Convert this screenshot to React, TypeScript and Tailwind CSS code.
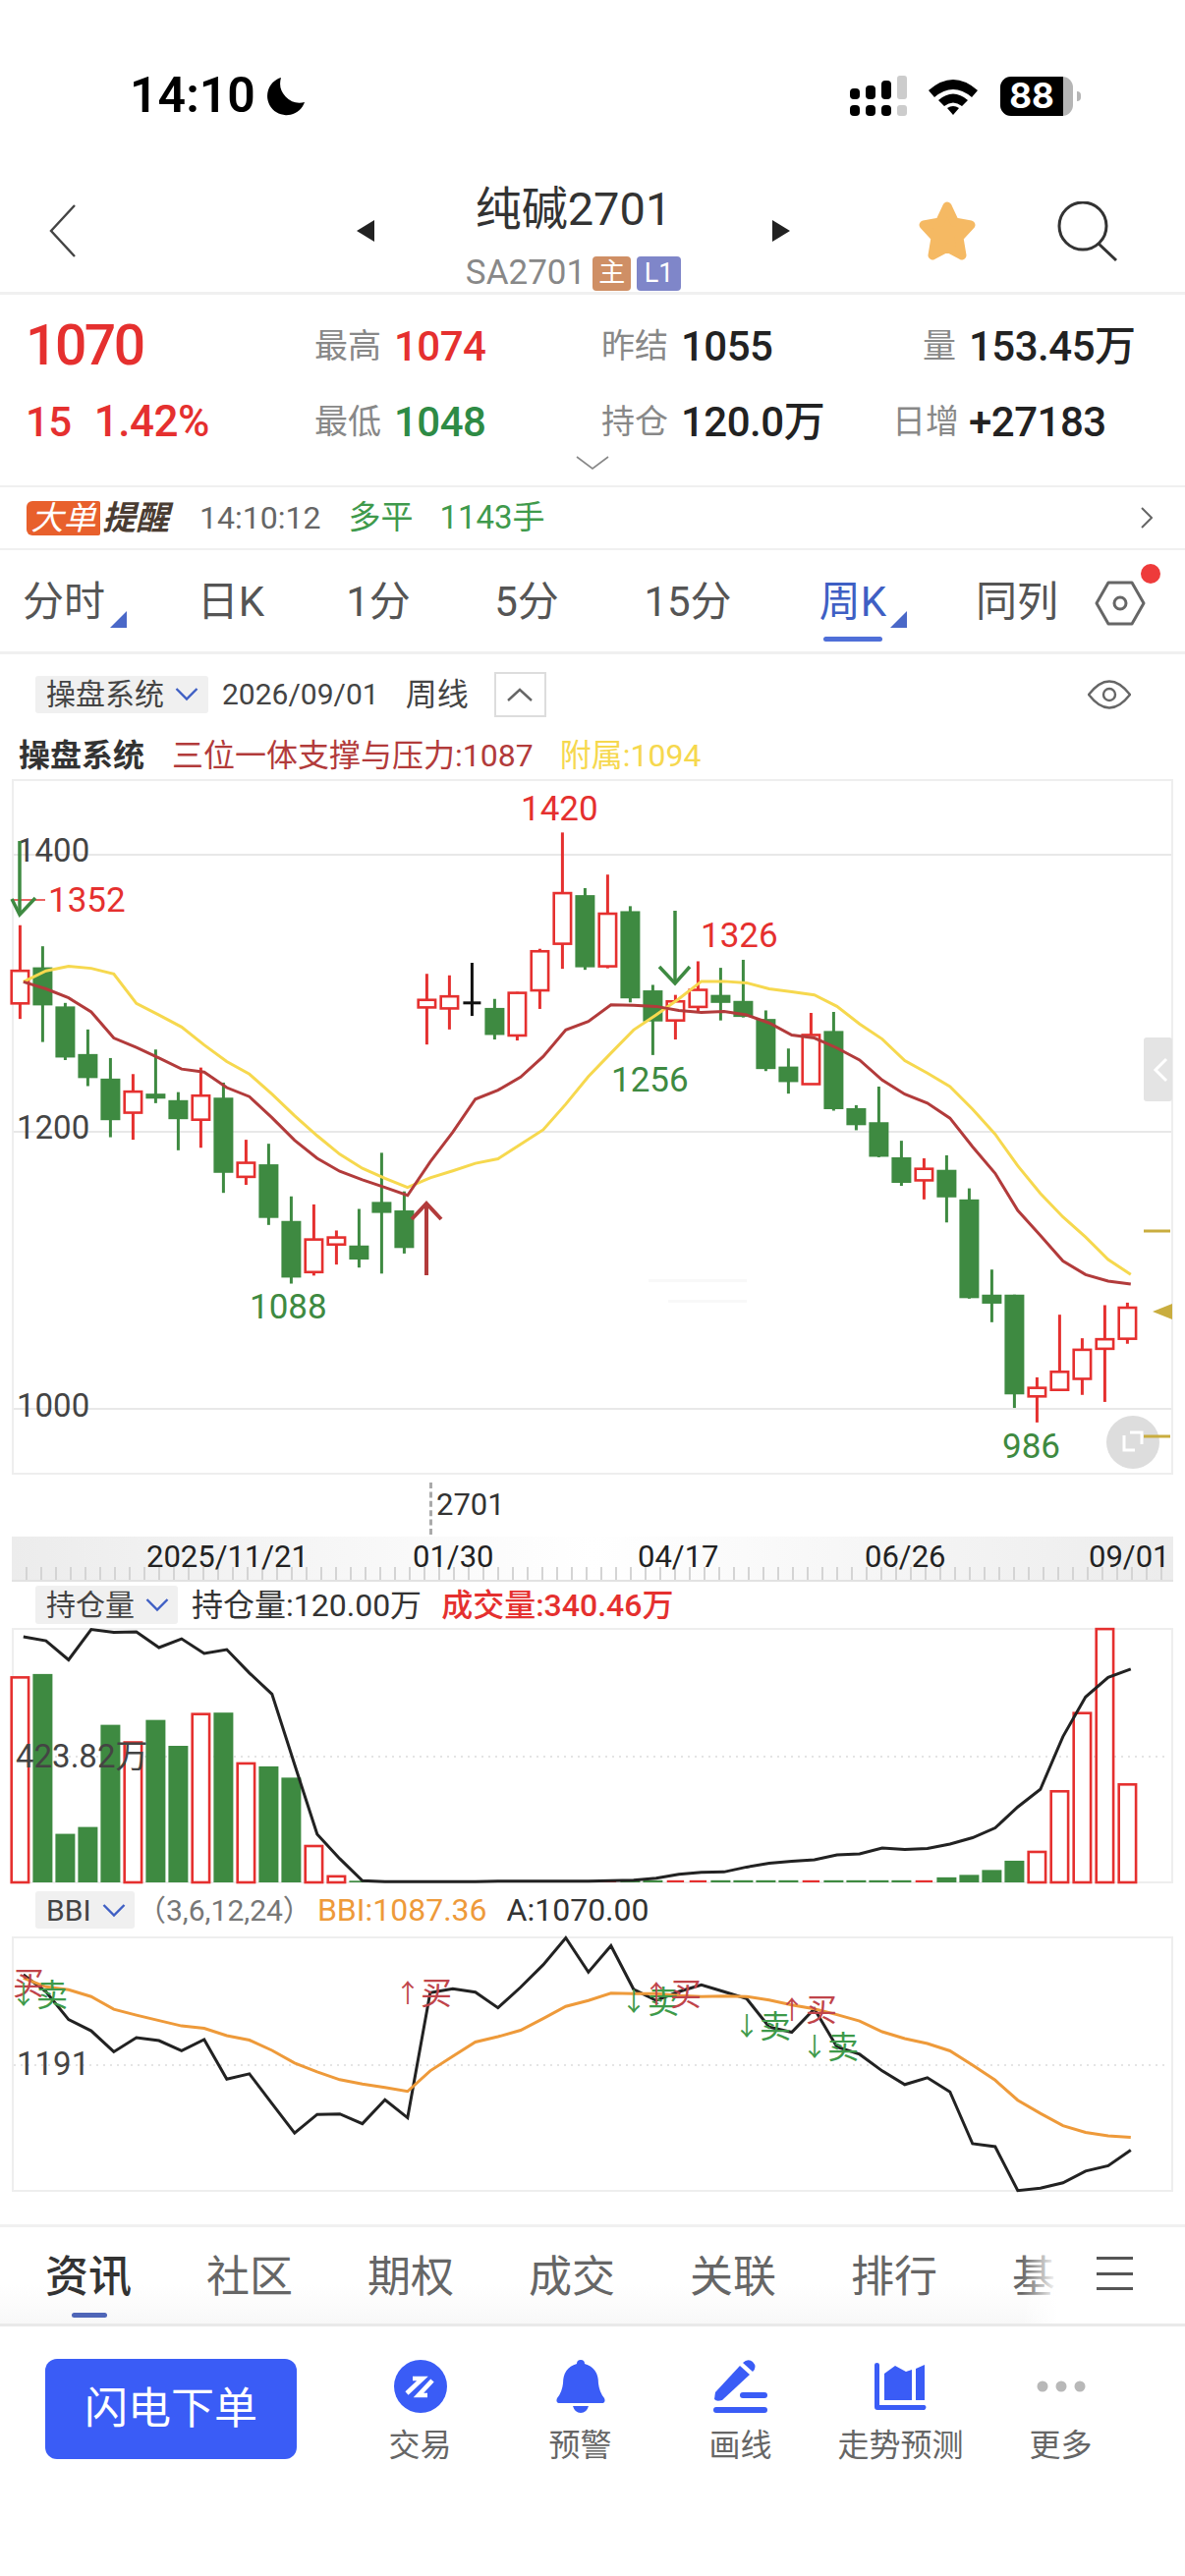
import React from 'react';

// k-line data is read off the picture, in crop pixels; my()/by() turn it into page pixels
const my = (z: number) => 680 + z / 1.96;
const by = (z: number) => 1480 + z / 2.01;
const cx = (i: number) => 20.4 + 23 * i;
const lx = (i: number) => 23.8 + 23 * i;

type Candle = [string, number, number, number, number];

const CANDLES: Candle[] = [
  ['r', 513, 604, 669, 700], ['g', 555, 597, 673, 746], ['g', 668, 675, 777, 782], ['g', 721, 770, 818, 834],
  ['g', 778, 819, 902, 936], ['r', 810, 845, 887, 941], ['g', 761, 849, 859, 868], ['g', 846, 862, 900, 962],
  ['r', 797, 853, 901, 957], ['g', 827, 857, 1007, 1047], ['r', 941, 987, 1015, 1031], ['g', 949, 990, 1097, 1111],
  ['g', 1054, 1103, 1216, 1228], ['r', 1070, 1140, 1205, 1212], ['r', 1122, 1136, 1150, 1190], ['g', 1079, 1152, 1180, 1196],
  ['g', 967, 1065, 1087, 1208], ['g', 1044, 1082, 1157, 1168], ['r', 610, 662, 677, 751], ['r', 613, 655, 679, 721],
  ['k', 588, 668, 668, 694], ['g', 660, 678, 732, 741], ['r', 646, 648, 733, 743], ['r', 560, 565, 643, 680],
  ['r', 328, 449, 550, 600], ['g', 439, 453, 597, 602], ['r', 412, 490, 595, 599], ['g', 475, 485, 659, 667],
  ['g', 632, 643, 705, 772], ['r', 652, 665, 703, 741], ['r', 585, 642, 676, 686], ['g', 598, 652, 668, 703],
  ['g', 582, 664, 696, 697], ['g', 683, 700, 800, 804], ['g', 759, 795, 826, 849], ['r', 688, 732, 830, 831],
  ['g', 686, 724, 880, 883], ['g', 872, 878, 912, 922], ['g', 835, 906, 975, 976], ['g', 943, 976, 1027, 1033],
  ['r', 978, 999, 1022, 1060], ['g', 972, 1001, 1056, 1106], ['g', 1038, 1060, 1257, 1258], ['g', 1200, 1250, 1268, 1305],
  ['g', 1250, 1250, 1449, 1476], ['r', 1415, 1436, 1453, 1505], ['r', 1290, 1404, 1440, 1441], ['r', 1337, 1360, 1418, 1450],
  ['r', 1271, 1339, 1358, 1464], ['r', 1266, 1276, 1338, 1348],
];

const YELLOW = [626, 604, 595, 599, 610, 669, 692, 716, 752, 785, 810, 850, 893, 933, 970, 998, 1018, 1036, 1017, 1003, 988, 979, 950, 921, 870, 815, 768, 722, 692, 660, 625, 625, 628, 640, 646, 652, 675, 710, 740, 783, 808, 835, 880, 930, 993, 1048, 1095, 1135, 1180, 1210];
const DARKRED = [626, 640, 658, 686, 738, 757, 778, 800, 806, 837, 855, 897, 942, 978, 1004, 1021, 1036, 1052, 985, 926, 860, 842, 816, 775, 722, 705, 672, 673, 675, 683, 687, 685, 692, 708, 732, 738, 758, 782, 822, 850, 868, 898, 955, 1008, 1082, 1132, 1183, 1210, 1223, 1229];

const VOL: [string, number][] = [
  ['r', 457], ['g', 450], ['g', 777], ['g', 763], ['g', 554], ['r', 590], ['g', 544], ['g', 597], ['r', 532], ['g', 529],
  ['r', 633], ['g', 639], ['g', 662], ['r', 802], ['r', 864], ['g', 873], ['g', 874], ['g', 874], ['r', 874], ['r', 874],
  ['g', 874], ['g', 874], ['r', 874], ['r', 874], ['g', 874], ['g', 874], ['r', 872], ['g', 872], ['g', 872], ['r', 872],
  ['r', 872], ['g', 872], ['g', 872], ['g', 872], ['g', 872], ['r', 872], ['g', 872], ['g', 872], ['g', 872], ['g', 872],
  ['r', 872], ['g', 866], ['g', 861], ['g', 851], ['g', 832], ['r', 814], ['r', 690], ['r', 530], ['r', 358], ['r', 676],
];
const OI = [374, 382, 421, 359, 365, 364, 396, 378, 408, 400, 448, 491, 635, 778, 828, 873, 875, 875, 875, 875, 875, 874, 874, 874, 874, 874, 873, 872, 868, 860, 856, 855, 845, 837, 833, 830, 820, 818, 806, 809, 807, 798, 785, 765, 722, 686, 578, 497, 457, 440];
const BBI = [1072, 1090, 1096, 1110, 1136, 1148, 1159, 1170, 1175, 1190, 1199, 1220, 1246, 1264, 1280, 1289, 1296, 1304, 1262, 1232, 1203, 1192, 1179, 1155, 1130, 1118, 1103, 1104, 1104, 1108, 1110, 1109, 1110, 1117, 1127, 1135, 1147, 1160, 1182, 1196, 1206, 1221, 1250, 1281, 1322, 1349, 1374, 1388, 1395, 1398];
const CLOSE = [1065, 1100, 1157, 1180, 1223, 1194, 1200, 1221, 1198, 1279, 1268, 1329, 1389, 1351, 1350, 1370, 1321, 1358, 1102, 1094, 1101, 1133, 1091, 1045, 990, 1060, 1006, 1095, 1118, 1100, 1086, 1100, 1114, 1172, 1183, 1135, 1213, 1228, 1262, 1290, 1276, 1305, 1411, 1417, 1507, 1502, 1491, 1467, 1456, 1424];

const pts = (vals: number[], conv: (z: number) => number) => vals.map((v, i) => `${lx(i)},${conv(v)}`).join(' ');

function ChevronDown() {
  return (
    <svg width="24" height="15" viewBox="0 0 24 15" className="ml-[11px]">
      <polyline points="1.5,2 12,12.5 22.5,2" fill="none" stroke="#3f5fc4" strokeWidth="2.4" />
    </svg>
  );
}

function Pill({ children, className }: { children: React.ReactNode; className: string }) {
  return <div className={`flex items-center rounded-[3px] bg-[#f0f0f0] pl-[11px] text-[30px] text-[#444] ${className}`}>{children}<ChevronDown /></div>;
}

function Candles() {
  return (
    <g>
      {CANDLES.map(([kind, hi, top, bot, lo], i) => {
        const x = cx(i);
        if (kind === 'k') {
          return (
            <g key={i} stroke="#111" strokeWidth="3">
              <line x1={x} x2={x} y1={my(hi)} y2={my(lo)} />
              <line x1={x - 9} x2={x + 9} y1={my(top)} y2={my(top)} />
            </g>
          );
        }
        const red = kind === 'r';
        const col = red ? '#e5302f' : '#3e8a41';
        return (
          <g key={i}>
            <line x1={x} x2={x} y1={my(hi)} y2={my(lo)} stroke={col} strokeWidth="3" />
            {red ? (
              <rect x={x - 8.7} y={my(top)} width={17.4} height={my(bot) - my(top)} fill="#fff" stroke={col} strokeWidth="2.6" />
            ) : (
              <rect x={x - 10} y={my(top)} width={20} height={my(bot) - my(top)} fill={col} />
            )}
          </g>
        );
      })}
    </g>
  );
}

function MainChart() {
  const tick = 'text-[33px] fill-[#444]';
  return (
    <div className="mx-[12px] h-[708px] border-2 border-[#eeeeee]">
      <svg width="1176" height="704" viewBox="14 795 1176 704" className="block overflow-visible">
        {[870, 1152, 1434].map((y) => (
          <line key={y} x1="14" x2="1192" y1={y} y2={y} stroke="#e8e8e8" strokeWidth="2" />
        ))}
        <rect x="660" y="1302" width="100" height="3" fill="#f8f8f8" />
        <rect x="680" y="1323" width="80" height="3" fill="#f8f8f8" />
        <Candles />
        <polyline points={pts(YELLOW, my)} fill="none" stroke="#f6d84e" strokeWidth="3" />
        <polyline points={pts(DARKRED, my)} fill="none" stroke="#b23b3b" strokeWidth="3" />
        <text x="17" y="865" dominantBaseline="central" className={tick}>1400</text>
        <text x="17" y="1147" dominantBaseline="central" className={tick}>1200</text>
        <text x="17" y="1430" dominantBaseline="central" className={tick}>1000</text>
        <line x1="14" x2="46" y1="916" y2="916" stroke="#e5302f" strokeWidth="1.5" />
        <text x="49" y="916" dominantBaseline="central" className="text-[35px] fill-[#e5302f]">1352</text>
        <text x="530" y="823" dominantBaseline="central" className="text-[35px] fill-[#e5302f]">1420</text>
        <text x="713" y="952" dominantBaseline="central" className="text-[35px] fill-[#e5302f]">1326</text>
        <text x="254" y="1330" dominantBaseline="central" className="text-[35px] fill-[#3e8a41]">1088</text>
        <text x="622" y="1099" dominantBaseline="central" className="text-[35px] fill-[#3e8a41]">1256</text>
        <text x="1020" y="1472" dominantBaseline="central" className="text-[35px] fill-[#3e8a41]">986</text>
        <g fill="none" stroke="#3e8a41" strokeWidth="3.5">
          <line x1="20" x2="20" y1="856" y2="930" />
          <polyline points="12,915 20,931 36,914" />
          <line x1="687" x2="687" y1="927" y2="1000" />
          <polyline points="671,984 687,1001 702,984" />
        </g>
        <g fill="none" stroke="#b23b3b" strokeWidth="4">
          <line x1="434" x2="434" y1="1226" y2="1298" />
          <polyline points="419,1241 434,1225 449,1241" />
        </g>
        <rect x="1164" y="1056" width="29" height="65" rx="3" fill="#e4e4e4" />
        <polyline points="1187,1078 1176,1089 1187,1100" fill="none" stroke="#fff" strokeWidth="3" />
        <circle cx="1153" cy="1468" r="27" fill="#dddddd" />
        <polyline points="1144,1461 1144,1476 1155,1476" fill="none" stroke="#fff" strokeWidth="3" />
        <polyline points="1150,1458 1162,1458 1162,1470" fill="none" stroke="#fff" strokeWidth="3" />
        <line x1="1164" x2="1191" y1="1253" y2="1253" stroke="#c9ad3f" strokeWidth="3" />
        <line x1="1164" x2="1191" y1="1462" y2="1462" stroke="#c9ad3f" strokeWidth="3" />
        <polygon points="1173,1335 1193,1327 1193,1343" fill="#c9ad3f" />
      </svg>
    </div>
  );
}

function DateStrip() {
  const labels: [string, number][] = [['2025/11/21', 149], ['01/30', 420], ['04/17', 649], ['06/26', 880], ['09/01', 1108]];
  const ticks = Array.from({ length: 79 }, (_, i) => i);
  return (
    <div className="mx-[12px] h-[46px] bg-gradient-to-r from-[#ececec] via-white via-50% to-[#ececec]">
      <svg width="1182" height="46" viewBox="12 1564 1182 46" className="block">
        {ticks.map((i) => (
          <line key={i} x1={27 + i * 15} x2={27 + i * 15} y1="1595" y2="1609" stroke="#d4d4d4" strokeWidth="2" />
        ))}
        <line x1="12" x2="1194" y1="1609" y2="1609" stroke="#e2e2e2" strokeWidth="2" />
        {labels.map(([t, x]) => (
          <text key={t} x={x} y="1584" dominantBaseline="central" className="text-[31px] fill-[#222]">{t}</text>
        ))}
      </svg>
    </div>
  );
}

function VolumeChart() {
  return (
    <div className="mx-[12px] h-[260px] border-2 border-[#eeeeee]">
      <svg width="1176" height="256" viewBox="14 1659 1176 256" className="block overflow-visible">
        <line x1="14" x2="1190" y1="1788" y2="1788" stroke="#e4e4e4" strokeWidth="2" strokeDasharray="2 5" />
        {VOL.map(([kind, top], i) => {
          const x = cx(i);
          const t = by(top);
          const h = 1916 - t;
          return kind === 'r' ? (
            <rect key={i} x={x - 8.7} y={t} width={17.4} height={h} fill={i > 15 && i < 41 ? '#e5302f' : '#fff'} stroke="#e5302f" strokeWidth={i > 15 && i < 41 ? 0 : 2.6} />
          ) : (
            <rect key={i} x={x - 10} y={t} width={20} height={h} fill="#3e8a41" />
          );
        })}
        <polyline points={pts(OI, by)} fill="none" stroke="#222" strokeWidth="3" />
        <text x="16" y="1787" dominantBaseline="central" className="text-[33px] fill-[#444]">423.82万</text>
      </svg>
    </div>
  );
}

function BbiChart() {
  // arrow centre, character left edge, vertical centre
  const marks: [string, string, number, number, number, boolean][] = [
    ['', '买', 0, 13, 2019, true], ['↓', '卖', 24, 37, 2031, false], ['↑', '买', 415, 428, 2029, true], ['↓', '卖', 645, 659, 2038, false],
    ['↑', '买', 668, 682, 2030, true], ['↓', '卖', 760, 773, 2063, false], ['↑', '买', 806, 820, 2046, true], ['↓', '卖', 829, 842, 2084, false],
  ];
  return (
    <div className="mx-[12px] h-[260px] border-2 border-[#eeeeee]">
      <svg width="1176" height="256" viewBox="14 1973 1176 256" className="block overflow-visible">
        <line x1="14" x2="1190" y1="2102" y2="2102" stroke="#e4e4e4" strokeWidth="2" strokeDasharray="2 5" />
        <polyline points={pts(CLOSE, by)} fill="none" stroke="#222" strokeWidth="3" />
        <polyline points={pts(BBI, by)} fill="none" stroke="#ee9a3a" strokeWidth="3" />
        <text x="17" y="2100" dominantBaseline="central" className="text-[33px] fill-[#444]">1191</text>
        {marks.map(([arrow, ch, ax, x, y, buy], i) => (
          <g key={i} className={buy ? 'fill-[#c0444a]' : 'fill-[#3e9a4a]'}>
            {arrow && <text x={ax} y={y} textAnchor="middle" dominantBaseline="central" className="text-[26px]">{arrow}</text>}
            <text x={x} y={y} dominantBaseline="central" className="text-[32px]">{ch}</text>
          </g>
        ))}
      </svg>
    </div>
  );
}

function StatusBar() {
  return (
    <div className="flex h-[180px] items-start pt-[65px] pl-[132px] pr-[106px]">
      <span className="text-[50px] font-semibold leading-[64px] text-black">14:10</span>
      <svg width="40" height="40" viewBox="0 0 40 40" className="ml-[11px] mt-[13px]">
        <path d="M15 1 A19.5 19.5 0 1 0 39 26 A20 20 0 0 1 15 1 Z" fill="#000" />
      </svg>
      <div className="ml-auto mt-[12px] flex items-center">
        <svg width="58" height="41" viewBox="0 0 58 41">
          <g fill="#000">
            <rect x="0" y="13" width="10" height="11" rx="4" />
            <rect x="16" y="10" width="10" height="14" rx="4" />
            <rect x="32" y="5" width="10" height="19" rx="4" />
            <rect x="0" y="30" width="10" height="11" rx="4" />
            <rect x="16" y="30" width="10" height="11" rx="4" />
            <rect x="32" y="30" width="10" height="11" rx="4" />
          </g>
          <rect x="48" y="0" width="10" height="24" rx="3" fill="#cccccc" />
          <rect x="48" y="30" width="10" height="11" rx="3" fill="#cccccc" />
        </svg>
        <svg width="50" height="38" viewBox="0 0 50 38" className="ml-[22px]">
          <path d="M0 13 Q25 -9 50 13 L44 20 Q25 4 6 20 Z" fill="#000" />
          <path d="M10 23 Q25 10 40 23 L34 29 Q25 22 16 29 Z" fill="#000" />
          <path d="M19 31 Q25 27 31 31 L25 38 Z" fill="#000" />
        </svg>
        <div className="ml-[23px] flex h-[40px] w-[74px] items-center overflow-hidden rounded-[11px] bg-[#b5b5b5]">
          <div className="flex h-full w-[64px] items-center justify-center bg-black font-[Inter] text-[35px] font-bold leading-none text-white">88</div>
        </div>
        <div className="ml-[4px] h-[10px] w-[4px] rounded-r-full bg-[#b5b5b5]" />
      </div>
    </div>
  );
}

function NavBar() {
  return (
    <div className="flex h-[120px] border-b-[3px] border-[#f0f0f0] pl-[50px]">
      <svg width="28" height="54" viewBox="0 0 28 54" className="mt-[28px]">
        <polyline points="26,1 2,27 26,53" fill="none" stroke="#444" strokeWidth="2.4" />
      </svg>
      <div className="ml-[285px] mt-[44px] h-0 w-0 border-y-[11px] border-r-[18px] border-y-transparent border-r-[#222]" />
      <div className="w-[405px] text-center">
        <div className="mt-[2px] text-[47px] leading-[62px] text-[#333]">纯碱2701</div>
        <div className="mt-[16px] flex items-center justify-center">
          <span className="text-[35px] leading-[36px] text-[#888]">SA2701</span>
          <span className="ml-[7px] flex h-[35px] w-[39px] items-center justify-center rounded-[4px] bg-[#cf8f65] text-[27px] text-white">主</span>
          <span className="ml-[6px] flex h-[35px] w-[45px] items-center justify-center rounded-[4px] bg-[#7f86c9] text-[27px] text-white">L1</span>
        </div>
      </div>
      <div className="mt-[44px] h-0 w-0 border-y-[11px] border-l-[18px] border-y-transparent border-l-[#222]" />
      <svg width="62" height="62" viewBox="0 0 62 62" className="ml-[129px] mt-[24px]">
        <polygon points="31,6 38.5,22 55,25 43,38 46,56 31,48 16,56 19,38 7,25 23.5,22" fill="#f5b963" stroke="#f5b963" strokeWidth="9" strokeLinejoin="round" />
      </svg>
      <svg width="62" height="62" viewBox="0 0 62 62" className="ml-[81px] mt-[25px]">
        <circle cx="26" cy="25" r="24" fill="none" stroke="#333" strokeWidth="3" />
        <line x1="42" y1="43" x2="60" y2="60" stroke="#333" strokeWidth="3" />
      </svg>
    </div>
  );
}

function Metric({ label, value, tone, labelWidth }: { label: string; value: string; tone: string; labelWidth?: string }) {
  return (
    <div className="flex items-center">
      <span className={`text-[34px] text-[#888] ${labelWidth ?? ''}`}>{label}</span>
      <span className={`ml-[13px] text-[42px] font-medium tracking-[-0.5px] ${tone}`}>{value}</span>
    </div>
  );
}

function Quote() {
  return (
    <div className="h-[196px] border-b-2 border-[#f0f0f0] pt-[20px]">
      <div className="flex h-[64px] items-center">
        <div className="w-[320px] pl-[26px] text-[57px] font-medium tracking-[-2.5px] text-[#e5302f]">1070</div>
        <div className="w-[292px]"><Metric label="最高" value="1074" tone="text-[#e5302f]" /></div>
        <div className="w-[296px]"><Metric label="昨结" value="1055" tone="text-[#222]" /></div>
        <Metric label="量" value="153.45万" tone="text-[#222]" labelWidth="w-[65px] text-right" />
      </div>
      <div className="mt-[13px] flex h-[64px] items-center">
        <div className="w-[320px] pl-[26px] text-[42px] font-medium tracking-[-0.5px] text-[#e5302f]">15<span className="ml-[23px] text-[44px]">1.42%</span></div>
        <div className="w-[292px]"><Metric label="最低" value="1048" tone="text-[#2e8b45]" /></div>
        <div className="w-[296px]"><Metric label="持仓" value="120.0万" tone="text-[#222]" /></div>
        <Metric label="日增" value="+27183" tone="text-[#222]" labelWidth="w-[65px] text-right whitespace-nowrap" />
      </div>
      <div className="flex justify-center pt-[3px]">
        <svg width="34" height="14" viewBox="0 0 34 14">
          <polyline points="1,1 17,13 33,1" fill="none" stroke="#888" strokeWidth="1.6" />
        </svg>
      </div>
    </div>
  );
}

function AlertRow() {
  return (
    <div className="flex h-[64px] items-center border-b-2 border-[#f0f0f0] pl-[27px]">
      <span className="flex h-[35px] w-[75px] items-center justify-center rounded-l-[6px] rounded-r-[2px] bg-[#e8602c] text-[33px] italic leading-none text-white">大单</span>
      <span className="ml-[2px] text-[34px] font-bold italic leading-none text-[#4a3c32]">提醒</span>
      <span className="ml-[31px] text-[32px] text-[#666]">14:10:12</span>
      <span className="ml-[28px] text-[33px] text-[#3f9a4c]">多平</span>
      <span className="ml-[27px] text-[33px] text-[#3f9a4c]">1143手</span>
      <svg width="12" height="22" viewBox="0 0 12 22" className="ml-auto mr-[33px]">
        <polyline points="1,1 11,11 1,21" fill="none" stroke="#666" strokeWidth="2" />
      </svg>
    </div>
  );
}

function PeriodTabs() {
  const corner = 'absolute bottom-[4px] h-0 w-0 border-b-[17px] border-l-[17px] border-b-[#4a68c8] border-l-transparent';
  const tab = 'text-center text-[42px] leading-[60px] text-[#555]';
  return (
    <div className="flex h-[106px] items-start border-b-[3px] border-[#f0f0f0] pt-[23px]">
      <div className={`${tab} relative w-[130px]`}>分时<span className={`${corner} right-[1px]`} /></div>
      <div className={`${tab} w-[210px]`}>日K</div>
      <div className={`${tab} w-[90px]`}>1分</div>
      <div className={`${tab} w-[212px]`}>5分</div>
      <div className={`${tab} w-[116px]`}>15分</div>
      <div className="relative w-[220px] text-center text-[42px] leading-[60px] text-[#3f5fc4]">
        周K
        <span className={`${corner} right-[55px]`} />
        <span className="absolute left-[80px] top-[65px] h-[5px] w-[60px] rounded-full bg-[#4f6fd8]" />
      </div>
      <div className={`${tab} w-[114px]`}>同列</div>
      <div className="relative pl-[22px]">
        <svg width="52" height="46" viewBox="0 0 52 46" className="mt-[8px]">
          <polygon points="2,23 14,2 38,2 50,23 38,44 14,44" fill="none" stroke="#666" strokeWidth="3" strokeLinejoin="round" />
          <circle cx="26" cy="23" r="6" fill="none" stroke="#666" strokeWidth="3" />
        </svg>
        <span className="absolute left-[69px] top-[-9px] h-[20px] w-[20px] rounded-full bg-[#ee3b3b]" />
      </div>
    </div>
  );
}

function ChartHeader() {
  return (
    <div className="h-[127px]">
      <div className="flex h-[81px] items-center pl-[36px]">
        <Pill className="h-[38px] w-[176px]">操盘系统</Pill>
        <span className="ml-[14px] text-[30px] text-[#444]">2026/09/01</span>
        <span className="ml-[27px] text-[32px] text-[#444]">周线</span>
        <div className="ml-[26px] flex h-[46px] w-[53px] items-center justify-center border-2 border-[#dddddd]">
          <svg width="26" height="14" viewBox="0 0 26 14">
            <polyline points="1,13 13,2 25,13" fill="none" stroke="#666" strokeWidth="2.4" />
          </svg>
        </div>
        <svg width="44" height="30" viewBox="0 0 44 30" className="ml-[551px]">
          <path d="M1 15 Q22 -12 43 15 Q22 42 1 15 Z" fill="none" stroke="#666" strokeWidth="2.4" />
          <circle cx="22" cy="15" r="6" fill="none" stroke="#666" strokeWidth="2.4" />
        </svg>
      </div>
      <div className="flex h-[44px] items-center pl-[19px] text-[32px] leading-none">
        <span className="font-semibold text-[#333]">操盘系统</span>
        <span className="ml-[28px] text-[#b23b3b]">三位一体支撑与压力:1087</span>
        <span className="ml-[27px] text-[#f6d84e]">附属:1094</span>
      </div>
    </div>
  );
}

function BottomTabs() {
  const tabs = ['社区', '期权', '成交', '关联', '排行', '基本'];
  return (
    <div className="relative h-[104px] overflow-hidden border-y-[3px] border-b-[#e9e9e9] border-t-[#f0f0f0] bg-gradient-to-b from-white from-60% to-[#f8f8f8]">
      <div className="flex gap-[76px] whitespace-nowrap pl-[46px] pt-[20px]">
        <div className="relative">
          <span className="text-[44px] font-medium leading-[62px] text-[#333]">资讯</span>
          <span className="absolute left-[27px] top-[67px] h-[5px] w-[36px] rounded-full bg-[#4f66b8]" />
        </div>
        {tabs.map((t) => (
          <span key={t} className="text-[44px] leading-[62px] text-[#666]">{t}</span>
        ))}
      </div>
      <div className="absolute right-0 top-0 flex h-full w-[166px] items-center bg-gradient-to-r from-transparent from-[0%] to-white to-[22%] pl-[76px]">
        <div className="-mt-[4px] flex h-[34px] w-[37px] flex-col justify-between">
          <span className="h-[3px] bg-[#555]" />
          <span className="h-[3px] bg-[#555]" />
          <span className="h-[3px] bg-[#555]" />
        </div>
      </div>
    </div>
  );
}

function ToolItem({ label, children }: { label: string; children: React.ReactNode }) {
  return (
    <div className="flex w-[163px] flex-col items-center">
      <div className="flex h-[56px] items-center justify-center">{children}</div>
      <div className="mt-[10px] text-[32px] leading-[44px] text-[#666]">{label}</div>
    </div>
  );
}

function Toolbar() {
  return (
    <div className="flex items-start pl-[46px] pt-[33px]">
      <button className="h-[102px] w-[256px] rounded-[12px] bg-[#3a5cf6] text-[44px] text-white">闪电下单</button>
      <div className="ml-[44px] flex">
        <ToolItem label="交易">
          <svg width="54" height="54" viewBox="0 0 54 54">
            <circle cx="27" cy="27" r="27" fill="#3a5cf6" />
            <g fill="none" stroke="#fff" strokeWidth="4.6">
              <polyline points="19,19 29,19 13,34" />
              <polyline points="39,21 25,36 34,36" />
            </g>
          </svg>
        </ToolItem>
        <ToolItem label="预警">
          <svg width="50" height="54" viewBox="0 0 50 54">
            <path d="M25 0 Q29 0 29 4 Q43 8 43 24 Q44 33 49 39 Q51 44 46 44 L4 44 Q-1 44 1 39 Q6 33 7 24 Q7 8 21 4 Q21 0 25 0 Z" fill="#3a5cf6" />
            <path d="M17 47 L33 47 Q31 54 25 54 Q19 54 17 47 Z" fill="#3a5cf6" />
          </svg>
        </ToolItem>
        <ToolItem label="画线">
          <svg width="55" height="54" viewBox="0 0 55 54">
            <path d="M1 40 L2 33 L27 6 L37 15 L9 41 Q3 43 1 40 Z" fill="#3a5cf6" />
            <path d="M30 3 Q35 -2 40 2 Q45 7 40 12 Z" fill="#3a5cf6" />
            <rect x="27" y="33" width="28" height="6" rx="3" fill="#3a5cf6" />
            <rect x="0" y="48" width="55" height="6" rx="3" fill="#3a5cf6" />
          </svg>
        </ToolItem>
        <ToolItem label="走势预测">
          <svg width="54" height="48" viewBox="0 0 54 48">
            <path d="M0 2 Q0 0 2.5 0 Q5 0 5 2 L5 43 L51 43 Q54 45 51 48 L3 48 Q0 48 0 45 Z" fill="#3a5cf6" />
            <polygon points="10,11 21,3 32,9 38,7 38,38 10,38" fill="#3a5cf6" />
            <polygon points="42,6 51,2 51,38 42,38" fill="#3a5cf6" />
          </svg>
        </ToolItem>
        <ToolItem label="更多">
          <svg width="50" height="12" viewBox="0 0 50 12">
            <circle cx="6" cy="6" r="5.5" fill="#b8b8b8" />
            <circle cx="25" cy="6" r="5.5" fill="#b8b8b8" />
            <circle cx="44" cy="6" r="5.5" fill="#b8b8b8" />
          </svg>
        </ToolItem>
      </div>
    </div>
  );
}

export default function App() {
  return (
    <div className="h-[2622px] w-[1206px] overflow-hidden bg-white font-['Roboto','Noto_Sans_CJK_SC',sans-serif]">
      <StatusBar />
      <NavBar />
      <Quote />
      <AlertRow />
      <PeriodTabs />
      <ChartHeader />
      <MainChart />

      <div className="h-[63px] pl-[437px] pt-[8px]">
        <div className="h-[53px] border-l-[3px] border-dashed border-[#aaaaaa] pl-[4px] text-[31px] leading-[46px] text-[#333]">2701</div>
      </div>
      <DateStrip />

      <div className="flex h-[47px] items-center pl-[36px]">
        <Pill className="h-[39px] w-[145px]">持仓量</Pill>
        <span className="ml-[14px] text-[32px] text-[#333]">持仓量:120.00万</span>
        <span className="ml-[20px] text-[32px] font-medium text-[#e5302f]">成交量:340.46万</span>
      </div>
      <VolumeChart />

      <div className="flex h-[54px] items-center pl-[36px]">
        <Pill className="h-[38px] w-[101px]">BBI</Pill>
        <span className="ml-[2px] text-[30px] text-[#777]">（3,6,12,24）</span>
        <span className="ml-[5px] text-[32px] text-[#ee9a3a]">BBI:1087.36</span>
        <span className="ml-[20px] text-[32px] text-[#333]">A:1070.00</span>
      </div>
      <BbiChart />

      <div className="h-[33px]" />
      <BottomTabs />
      <Toolbar />
    </div>
  );
}
